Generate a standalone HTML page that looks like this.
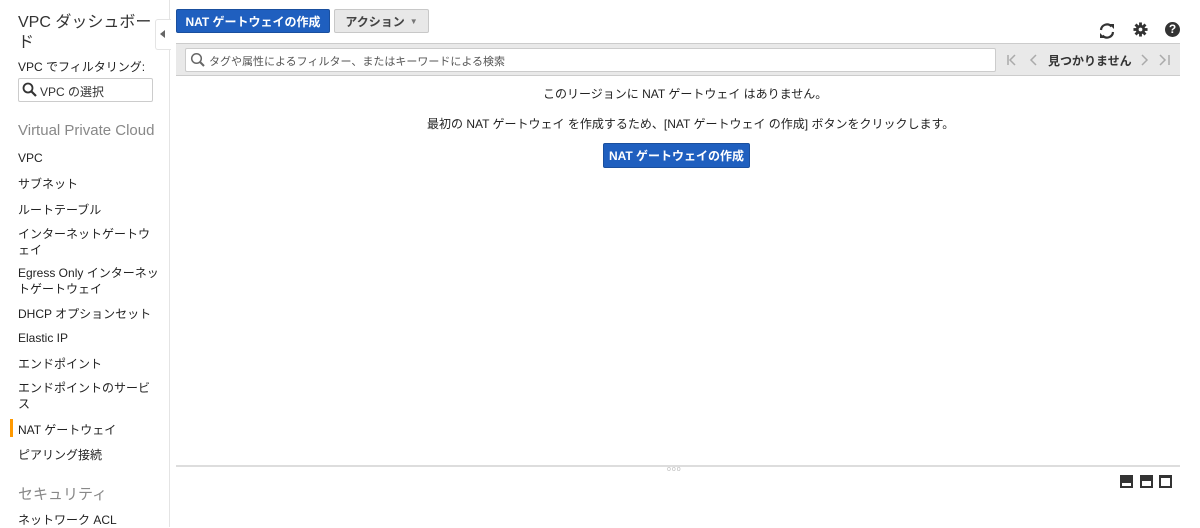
<!DOCTYPE html>
<html><head><meta charset="utf-8"><style>
*{box-sizing:border-box;margin:0;padding:0}
body{width:1200px;height:527px;overflow:hidden;background:#fff;font-family:"Liberation Sans","Noto Sans CJK JP",sans-serif;color:#222;position:relative;font-size:12px}
.side{position:absolute;left:0;top:0;width:170px;height:527px;border-right:1px solid #e4e4e4}
.abs{position:absolute;white-space:nowrap}
.nav{position:absolute;left:18px;font-size:12px;color:#222}
.btn{position:absolute;height:24px;border-radius:2px;font-size:12px;font-weight:bold;display:flex;align-items:center;justify-content:center}
.blue{background:#1f5fbf;color:#fff;border:1px solid #1a4f9e}
.grey{background:#e8e8e8;color:#444;border:1px solid #c8c8c8}
.pg{position:absolute;top:51px;color:#aaa;font-size:15px}
</style></head><body>
<div class="side">
<div class="abs" style="left:18px;top:13px;font-size:16px;line-height:20px;color:#333;white-space:normal;width:135px">VPC ダッシュボード</div>
<div class="abs" style="left:18px;top:58px;font-size:12px">VPC でフィルタリング:</div>
<div class="abs" style="left:18px;top:78px;width:135px;height:24px;border:1px solid #ccc;border-radius:2px;font-size:12px;padding:4px 0 0 21px;color:#333">VPC の選択</div>
<svg class="abs" style="left:22px;top:82px" width="16" height="16"><circle cx="6" cy="6" r="4.5" fill="none" stroke="#333" stroke-width="1.8"/><line x1="9.5" y1="9.5" x2="14" y2="14" stroke="#333" stroke-width="2.2"/></svg>
<div class="abs" style="left:18px;top:122px;font-size:15px;color:#888">Virtual Private Cloud</div>
<div class="nav" style="top:151px">VPC</div>
<div class="nav" style="top:175px">サブネット</div>
<div class="nav" style="top:201px">ルートテーブル</div>
<div class="nav" style="top:226px;line-height:16px;width:140px">インターネットゲートウェイ</div>
<div class="nav" style="top:265px;line-height:16px;white-space:nowrap">Egress Only インターネッ<br>トゲートウェイ</div>
<div class="nav" style="top:305px">DHCP オプションセット</div>
<div class="nav" style="top:331px">Elastic IP</div>
<div class="nav" style="top:355px">エンドポイント</div>
<div class="nav" style="top:380px;line-height:16px;width:135px">エンドポイントのサービス</div>
<div class="abs" style="left:10px;top:419px;width:3px;height:18px;background:#f90"></div>
<div class="nav" style="top:421px">NAT ゲートウェイ</div>
<div class="nav" style="top:446px">ピアリング接続</div>
<div class="abs" style="left:18px;top:483px;font-size:15px;color:#888">セキュリティ</div>
<div class="nav" style="top:511px">ネットワーク ACL</div>
</div>
<div class="abs" style="left:155px;top:19px;width:16px;height:31px;background:#fff;border:1px solid #e4e4e4;border-right:none;border-radius:3px 0 0 3px"></div>
<div class="abs" style="left:160px;top:30px;width:0;height:0;border-top:4px solid transparent;border-bottom:4px solid transparent;border-right:5px solid #666"></div>
<div class="btn blue" style="left:176px;top:9px;width:154px">NAT ゲートウェイの作成</div>
<div class="btn grey" style="left:334px;top:9px;width:95px">アクション <span style="font-size:8px;margin-left:5px;color:#777">▼</span></div>
<svg class="abs" style="left:1098px;top:22px" width="18" height="18" viewBox="0 0 18 18"><path d="M3 8a6 6 0 0 1 10.5-3.5" fill="none" stroke="#333" stroke-width="2.2"/><path d="M15 10a6 6 0 0 1-10.5 3.5" fill="none" stroke="#333" stroke-width="2.2"/><path d="M11 2h5v5z" fill="#333"/><path d="M7 16H2v-5z" fill="#333"/></svg>
<svg class="abs" style="left:1133px;top:22px" width="15" height="15" viewBox="0 0 16 16"><g fill="#333"><circle cx="8" cy="8" r="5"/><rect x="6.5" y="0.5" width="3" height="15"/><rect x="0.5" y="6.5" width="15" height="3"/><rect x="6.5" y="0.5" width="3" height="15" transform="rotate(45 8 8)"/><rect x="6.5" y="0.5" width="3" height="15" transform="rotate(-45 8 8)"/></g><circle cx="8" cy="8" r="2" fill="#fff"/></svg>
<div class="abs" style="left:1165px;top:22px;width:15px;height:15px;border-radius:50%;background:#333;color:#fff;font-size:12px;font-weight:bold;text-align:center;line-height:15px">?</div>
<div class="abs" style="left:176px;top:43px;width:1004px;height:33px;background:#e9e9e9;border-top:1px solid #ccc;border-bottom:1px solid #ccc"></div>
<div class="abs" style="left:185px;top:48px;width:811px;height:24px;background:#fff;border:1px solid #ccc;border-radius:2px;padding:4px 0 0 23px;color:#555;font-size:11px">タグや属性によるフィルター、またはキーワードによる検索</div>
<svg class="abs" style="left:190px;top:52px" width="16" height="16"><circle cx="6.5" cy="6.5" r="4.8" fill="none" stroke="#666" stroke-width="1.5"/><line x1="10" y1="10" x2="14" y2="14" stroke="#666" stroke-width="2"/></svg>
<svg class="abs" style="left:1006px;top:54px" width="36" height="12"><g fill="none" stroke="#aaa" stroke-width="1.5"><path d="M2 1v10M9 1l-5 5 5 5M30 1l-5 5 5 5"/></g></svg>
<div class="abs" style="left:1048px;top:52px;font-weight:bold;color:#333">見つかりません</div>
<svg class="abs" style="left:1140px;top:54px" width="32" height="12"><g fill="none" stroke="#aaa" stroke-width="1.5"><path d="M2 1l5 5-5 5M20 1l5 5-5 5M29 1v10"/></g></svg>
<div class="abs" style="left:543px;top:85px;color:#222">このリージョンに NAT ゲートウェイ はありません。</div>
<div class="abs" style="left:427px;top:115px;color:#222">最初の NAT ゲートウェイ を作成するため、[NAT ゲートウェイ の作成] ボタンをクリックします。</div>
<div class="btn blue" style="left:603px;top:143px;width:147px;height:25px">NAT ゲートウェイの作成</div>
<div class="abs" style="left:176px;top:465px;width:1004px;height:2px;background:#ddd"></div>
<div class="abs" style="left:667px;top:466px;color:#bbb;font-size:7px;letter-spacing:1px">ooo</div>
<div class="abs" style="left:1120px;top:475px;width:13px;height:13px;background:#333;border:1px solid #333"><div style="position:absolute;left:1px;right:1px;bottom:1px;height:3px;background:#fff"></div></div>
<div class="abs" style="left:1140px;top:475px;width:13px;height:13px;background:#333;border:1px solid #333"><div style="position:absolute;left:1px;right:1px;bottom:1px;height:5px;background:#fff"></div></div>
<div class="abs" style="left:1159px;top:475px;width:13px;height:13px;background:#333;border:1px solid #333"><div style="position:absolute;left:1px;right:1px;bottom:1px;height:8px;background:#fff"></div></div>
</body></html>
